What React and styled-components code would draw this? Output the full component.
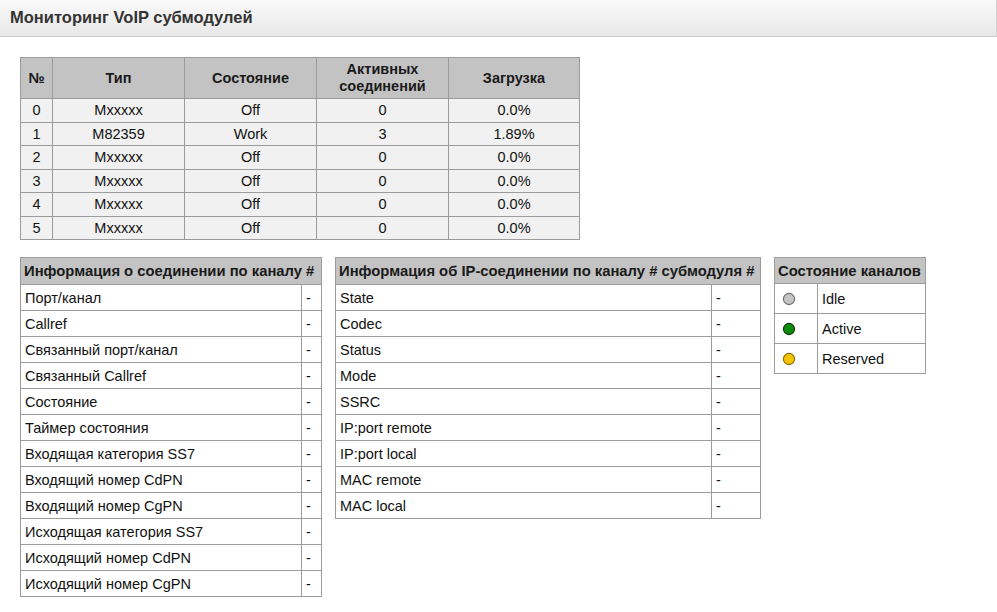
import React from "react";
import styled, { createGlobalStyle } from "styled-components";

const GlobalStyle = createGlobalStyle`
  html, body {
    margin: 0;
    padding: 0;
    background: #fff;
  }
  body {
    font-family: "Liberation Sans", Arial, sans-serif;
    font-size: 14.5px;
    color: #111;
  }
`;

const modules = [
  { n: 0, type: "Mxxxxx", state: "Off", active: 0, load: "0.0%" },
  { n: 1, type: "M82359", state: "Work", active: 3, load: "1.89%" },
  { n: 2, type: "Mxxxxx", state: "Off", active: 0, load: "0.0%" },
  { n: 3, type: "Mxxxxx", state: "Off", active: 0, load: "0.0%" },
  { n: 4, type: "Mxxxxx", state: "Off", active: 0, load: "0.0%" },
  { n: 5, type: "Mxxxxx", state: "Off", active: 0, load: "0.0%" }
];

const channelInfo = [
  "Порт/канал",
  "Callref",
  "Связанный порт/канал",
  "Связанный Callref",
  "Состояние",
  "Таймер состояния",
  "Входящая категория SS7",
  "Входящий номер CdPN",
  "Входящий номер CgPN",
  "Исходящая категория SS7",
  "Исходящий номер CdPN",
  "Исходящий номер CgPN"
];

const ipInfo = [
  "State",
  "Codec",
  "Status",
  "Mode",
  "SSRC",
  "IP:port remote",
  "IP:port local",
  "MAC remote",
  "MAC local"
];

const legend = [
  { label: "Idle", fill: "#c4c4c4", stroke: "#6e6e6e" },
  { label: "Active", fill: "#0c8a0c", stroke: "#0a3d0a" },
  { label: "Reserved", fill: "#f5c400", stroke: "#8a6a00" }
];

const moduleCols = [32, 132, 132, 132, 131];

const InfoBlock = ({ title, rows, width, valueWidth }) => (
  <InfoTable $width={width}>
    <colgroup>
      <Col />
      <Col $w={valueWidth} />
    </colgroup>
    <thead>
      <tr>
        <InfoHead colSpan={2}>{title}</InfoHead>
      </tr>
    </thead>
    <tbody>
      {rows.map((label) => (
        <tr key={label}>
          <InfoCell>{label}</InfoCell>
          <InfoCell>-</InfoCell>
        </tr>
      ))}
    </tbody>
  </InfoTable>
);

const App = () => (
  <>
    <GlobalStyle />
    <TitleBar>Мониторинг VoIP субмодулей</TitleBar>
    <Content>
      <ModulesTable>
        <colgroup>
          {moduleCols.map((w, i) => (
            <Col key={i} $w={w} />
          ))}
        </colgroup>
        <thead>
          <tr>
            <ModHead>№</ModHead>
            <ModHead>Тип</ModHead>
            <ModHead>Состояние</ModHead>
            <ModHead>
              Активных
              <br />
              соединений
            </ModHead>
            <ModHead>Загрузка</ModHead>
          </tr>
        </thead>
        <tbody>
          {modules.map((m) => (
            <tr key={m.n}>
              <ModCell>{m.n}</ModCell>
              <ModCell>{m.type}</ModCell>
              <ModCell>{m.state}</ModCell>
              <ModCell>{m.active}</ModCell>
              <ModCell>{m.load}</ModCell>
            </tr>
          ))}
        </tbody>
      </ModulesTable>

      <InfoRow>
        <InfoBlock
          title="Информация о соединении по каналу #"
          rows={channelInfo}
          width={302}
          valueWidth={20}
        />
        <InfoBlock
          title="Информация об IP-соединении по каналу # субмодуля #"
          rows={ipInfo}
          width={426}
          valueWidth={49}
        />

        <InfoTable $width={152}>
          <colgroup>
            <Col $w={43} />
            <Col />
          </colgroup>
          <thead>
            <tr>
              <InfoHead colSpan={2} $h={25}>
                Состояние каналов
              </InfoHead>
            </tr>
          </thead>
          <tbody>
            {legend.map((l) => (
              <tr key={l.label}>
                <DotCell>
                  <svg width="14" height="14" viewBox="0 0 14 14">
                    <circle cx="7" cy="7" r="5.6" fill={l.fill} stroke={l.stroke} strokeWidth="1.1" />
                  </svg>
                </DotCell>
                <InfoCell $h={29}>{l.label}</InfoCell>
              </tr>
            ))}
          </tbody>
        </InfoTable>
      </InfoRow>
    </Content>
  </>
);

export default App;

// Styles
const TitleBar = styled.div`
  height: 37px;
  box-sizing: border-box;
  padding: 0 10px 1px;
  display: flex;
  align-items: center;
  background: linear-gradient(to bottom, #fafafa 0%, #e8e8e8 100%);
  border-bottom: 1px solid #c8c8c8;
  border-right: 1px solid #d4d4d4;
  font-size: 16.5px;
  font-weight: bold;
  color: #333;
`;

const Content = styled.div`
  padding: 20px 20px 0 20px;
  display: flex;
  flex-direction: column;
  gap: 17px;
`;

const Col = styled.col`
  width: ${(p) => (p.$w ? `${p.$w}px` : "auto")};
`;

const ModulesTable = styled.table`
  border-collapse: collapse;
  table-layout: fixed;
  width: 560px;
`;

const ModHead = styled.th`
  border: 1px solid #9c9c9c;
  background: #c3c3c3;
  color: #1a1a1a;
  font-weight: bold;
  text-align: center;
  padding: 0;
  line-height: 17px;
  height: 40px;
`;

const ModCell = styled.td`
  border: 1px solid #9c9c9c;
  background: #f1f1f1;
  text-align: center;
  padding: 0;
  line-height: 16px;
  height: 22.5px;
`;

const InfoRow = styled.div`
  display: flex;
  align-items: flex-start;
  gap: 13px;
`;

const InfoTable = styled.table`
  border-collapse: collapse;
  table-layout: fixed;
  width: ${(p) => p.$width}px;
`;

const InfoHead = styled.th`
  border: 1px solid #9c9c9c;
  background: #c3c3c3;
  color: #1a1a1a;
  font-size: 14.8px;
  font-weight: bold;
  text-align: left;
  white-space: nowrap;
  padding: 0 3px;
  height: ${(p) => p.$h || 26}px;
`;

const InfoCell = styled.td`
  border: 1px solid #9c9c9c;
  background: #fff;
  text-align: left;
  white-space: nowrap;
  padding: 0 4px;
  height: ${(p) => p.$h || 25}px;
`;

const DotCell = styled.td`
  border: 1px solid #9c9c9c;
  background: #fff;
  padding: 0 0 0 7px;
  height: 29px;

  svg {
    display: block;
  }
`;
